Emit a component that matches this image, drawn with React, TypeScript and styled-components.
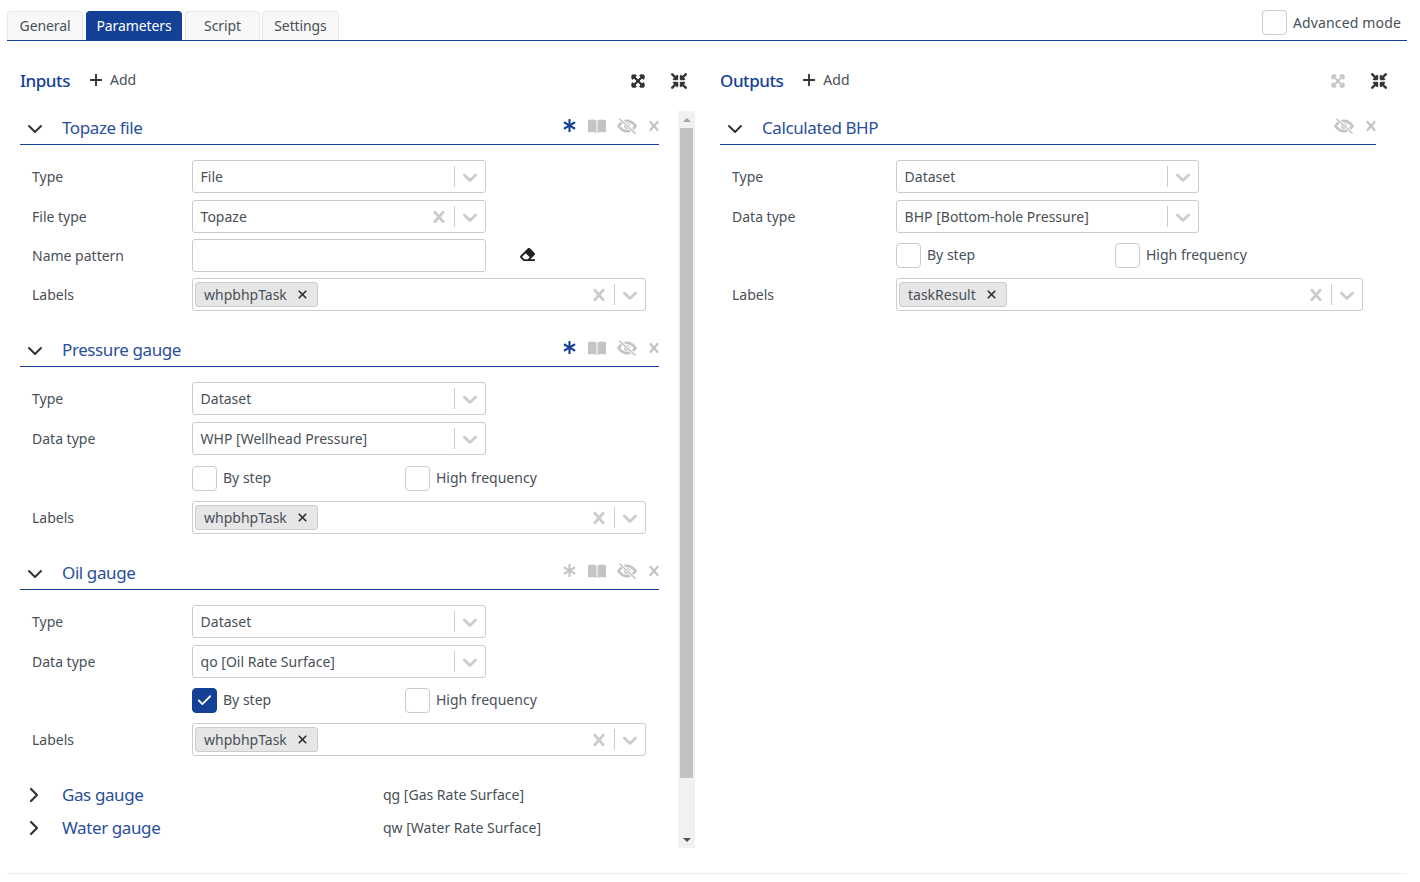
import React from 'react';
import styled, { createGlobalStyle } from 'styled-components';
import { Plus, ChevronDown, ChevronRight, Check, X } from 'lucide-react';
import { FaAsterisk, FaEraser, FaExpandArrowsAlt, FaCompressArrowsAlt } from 'react-icons/fa';

const PRIMARY = '#144196';
const FONT = '"Noto Sans", "Open Sans", sans-serif';

const Global = createGlobalStyle`
    html, body {
        margin: 0;
        background: #fff;
        font-family: ${FONT};
        font-size: 14px;
        color: #495057;
    }
`;

const Page = styled.div`
    width: 1420px;
    height: 882px;
    box-sizing: border-box;
    padding: 11px 13px 0 7px;
    display: flex;
    flex-direction: column;
    overflow: hidden;
`;

const TabBar = styled.div`
    height: 29px;
    display: flex;
    align-items: flex-end;
    gap: 3px;
    border-bottom: 1px solid ${PRIMARY};
    box-sizing: content-box;
`;

const Tab = styled.div<{ $active?: boolean; $w: number; $tight?: boolean }>`
    width: ${(p) => p.$w}px;
    height: 29px;
    box-sizing: border-box;
    padding-bottom: 2px;
    margin-left: ${(p) => (p.$tight ? '-1px' : '0')};
    display: flex;
    align-items: center;
    justify-content: center;
    border: 1px solid ${(p) => (p.$active ? PRIMARY : '#e6e6e6')};
    border-bottom: none;
    border-radius: 4px 4px 0 0;
    background: ${(p) => (p.$active ? PRIMARY : '#f8f8f8')};
    color: ${(p) => (p.$active ? '#fff' : '#495057')};
    font-size: 14px;
    letter-spacing: -0.1px;
`;

const Advanced = styled.label`
    margin-left: auto;
    align-self: flex-start;
    margin-top: -1px;
    margin-right: 6px;
    display: flex;
    align-items: center;
    gap: 6px;
    font-size: 14px;
    letter-spacing: 0.15px;
`;

const Columns = styled.div`
    display: flex;
    padding-left: 13px;
    flex: 1;
    min-height: 0;
`;

const Column = styled.div<{ $w: number }>`
    width: ${(p) => p.$w}px;
    display: flex;
    flex-direction: column;
`;

const ColumnHead = styled.div<{ $w: number }>`
    width: ${(p) => p.$w}px;
    height: 70px;
    box-sizing: border-box;
    display: flex;
    align-items: center;
    padding-top: 10px;
`;

const ColumnTitle = styled.div`
    color: ${PRIMARY};
    font-size: 17px;
    font-weight: 500;
    letter-spacing: -0.45px;
    margin-top: -2px;
    margin-right: 17px;
`;

const AddButton = styled.div`
    display: flex;
    align-items: center;
    gap: 5px;
    font-size: 14px;
    color: #495057;
    margin-top: -3px;
`;

const HeadIcons = styled.div`
    margin-left: auto;
    display: flex;
    gap: 26px;
    align-items: center;
    margin-top: -1px;
`;

const Scroller = styled.div`
    display: flex;
    height: 737px;
`;

const List = styled.div`
    width: 658px;
`;

const Track = styled.div`
    width: 17px;
    height: 737px;
    background: #f1f1f1;
    display: flex;
    flex-direction: column;
    align-items: center;
`;

const Arrow = styled.div<{ $up?: boolean }>`
    height: 17px;
    display: flex;
    align-items: center;
    justify-content: center;
    &::before {
        content: '';
        border-left: 4px solid transparent;
        border-right: 4px solid transparent;
        ${(p) => (p.$up ? 'border-bottom: 4px solid #a3a3a3;' : 'border-top: 4px solid #505050;')}
    }
`;

const Thumb = styled.div`
    width: 13px;
    height: 650px;
    background: #c1c1c1;
`;

const TrackFill = styled.div`
    flex: 1;
`;

const Section = styled.div<{ $w: number; $h?: number }>`
    width: ${(p) => p.$w}px;
    height: ${(p) => p.$h ?? 222}px;
`;

const SectionHead = styled.div`
    height: 33px;
    box-sizing: content-box;
    border-bottom: 1px solid ${PRIMARY};
    display: flex;
    align-items: center;
    padding-left: 3px;
`;

const Caret = styled(ChevronDown)`
    margin-top: 2px;
`;

const Name = styled.div`
    color: ${PRIMARY};
    font-size: 17px;
    font-weight: 400;
    letter-spacing: -0.4px;
    margin-left: 15px;
    opacity: 0.92;
`;

const ActionIcons = styled.div`
    margin-left: auto;
    margin-top: -4px;
    display: flex;
    align-items: center;
    gap: 11px;
    margin-right: -5px;
`;

const StarSlot = styled.span`
    display: flex;
    margin-right: 1px;
`;

const CloseSlot = styled.span`
    display: flex;
    margin-left: -4px;
`;

const Fields = styled.div`
    padding: 15px 0 0 12px;
`;

const Row = styled.div<{ $h?: number; $mb?: number }>`
    display: flex;
    align-items: center;
    height: ${(p) => p.$h ?? 33}px;
    margin-bottom: ${(p) => p.$mb ?? 7}px;
`;

const Label = styled.div<{ $w: number }>`
    width: ${(p) => p.$w}px;
    flex: none;
    margin-top: -1px;
`;

const Control = styled.div<{ $w: number }>`
    width: ${(p) => p.$w}px;
    height: 33px;
    box-sizing: border-box;
    border: 1px solid #ccc;
    border-radius: 3px;
    background: #fff;
    display: flex;
    align-items: center;
    padding-left: 7.6px;
    color: #495057;
`;

const Value = styled.div`
    flex: 1;
    white-space: nowrap;
`;

const TagValue = styled.div`
    flex: 1;
`;

const Indicators = styled.div`
    display: flex;
    align-items: center;
    flex: none;
    padding-right: 3px;
`;

const Divider = styled.span`
    width: 1px;
    height: 21px;
    background: #ccc;
    margin: 0 3px;
`;

const Tag = styled.div`
    width: fit-content;
    height: 25px;
    box-sizing: border-box;
    margin-left: -5.6px;
    padding: 0 8px 0 8px;
    display: flex;
    align-items: center;
    gap: 9px;
    background: #e6e6e6;
    border: 1px solid #ccc;
    border-radius: 3px;
    color: #495057;
    font-size: 14px;
`;

const Box = styled.span<{ $checked?: boolean }>`
    width: 25px;
    height: 25px;
    box-sizing: border-box;
    flex: none;
    display: flex;
    align-items: center;
    justify-content: center;
    border: 1px solid ${(p) => (p.$checked ? PRIMARY : '#ccc')};
    border-radius: 4px;
    background: ${(p) => (p.$checked ? PRIMARY : '#fff')};
`;

const CheckItem = styled.div<{ $w: number }>`
    width: ${(p) => p.$w}px;
    display: flex;
    align-items: center;
    gap: 6px;
`;

const CheckText = styled.span`
    margin-top: -2px;
`;

const EraserSlot = styled.div`
    margin-left: 34px;
    margin-top: -2px;
    display: flex;
    color: #222;
`;

const Collapsed = styled.div`
    height: 33px;
    display: flex;
    align-items: center;
    padding-left: 2px;
`;

const CollapsedName = styled(Name)`
    width: 321px;
    margin-left: 16px;
`;

const Footer = styled.div`
    height: 1px;
    background: #eee;
    margin-bottom: 8px;
`;

const TopGap = styled.div`
    height: 3px;
`;

const ReactSelectChevron = () => (
    <svg width="24" height="24" viewBox="0 0 20 20" fill="#ccc">
        <path d="M4.516 7.548c0.436-0.446 1.043-0.481 1.576 0l3.908 3.747 3.908-3.747c0.533-0.481 1.141-0.446 1.574 0 0.436 0.445 0.408 1.197 0 1.615-0.406 0.418-4.695 4.502-4.695 4.502-0.217 0.223-0.502 0.335-0.787 0.335s-0.57-0.112-0.789-0.335c0 0-4.287-4.084-4.695-4.502s-0.436-1.17 0-1.615z" />
    </svg>
);

const ReactSelectCross = ({ color = '#ccc', size = 24 }: { color?: string; size?: number }) => (
    <svg width={size} height={size} viewBox="0 0 20 20" fill={color}>
        <path d="M14.348 14.849c-0.469 0.469-1.229 0.469-1.697 0l-2.651-3.030-2.651 3.029c-0.469 0.469-1.229 0.469-1.697 0-0.469-0.469-0.469-1.229 0-1.697l2.758-3.15-2.759-3.152c-0.469-0.469-0.469-1.228 0-1.697s1.228-0.469 1.697 0l2.652 3.031 2.651-3.031c0.469-0.469 1.228-0.469 1.697 0s0.469 1.229 0 1.697l-2.758 3.152 2.758 3.15c0.469 0.469 0.469 1.229 0 1.698z" />
    </svg>
);

const BookIcon = () => (
    <svg width="18" height="14" viewBox="0 0 18 14" fill="#c4c4c4">
        <path d="M0 1.2C2.8 .2 6 .2 8.5 1.4V14C6 12.8 2.8 12.8 0 13.6Z" />
        <path d="M18 1.2C15.2 .2 12 .2 9.5 1.4V14C12 12.8 15.2 12.8 18 13.6Z" />
    </svg>
);

const HiddenEyeIcon = () => (
    <svg width="20" height="16" viewBox="0 0 20 16" fill="none">
        <path d="M1.5 8C4 4.4 6.8 2.8 10 2.8S16 4.4 18.5 8C16 11.6 13.2 13.2 10 13.2S4 11.6 1.5 8Z" stroke="#c4c4c4" strokeWidth="2.7" />
        <circle cx="10" cy="8" r="3" fill="#c4c4c4" />
        <path d="M3 .8L18 15.2" stroke="#fff" strokeWidth="3.2" />
        <path d="M2.4 .8L18.6 15.6" stroke="#c4c4c4" strokeWidth="1.5" />
    </svg>
);

const Select = ({ w, value, clear }: { w: number; value: string; clear?: boolean }) => (
    <Control $w={w}>
        <Value>{value}</Value>
        <Indicators>
            {clear && <ReactSelectCross />}
            <Divider />
            <ReactSelectChevron />
        </Indicators>
    </Control>
);

const TagSelect = ({ w, tag }: { w: number; tag: string }) => (
    <Control $w={w}>
        <TagValue>
            <Tag>
                {tag}
                <X size={13} strokeWidth={3.2} color="#333" />
            </Tag>
        </TagValue>
        <Indicators>
            <ReactSelectCross />
            <Divider />
            <ReactSelectChevron />
        </Indicators>
    </Control>
);

const Actions = ({ star, starOff, hideStar }: { star?: boolean; starOff?: boolean; hideStar?: boolean }) => (
    <ActionIcons>
        {!hideStar && (
            <StarSlot>
                <FaAsterisk size={13} color={star ? PRIMARY : starOff ? '#c4c4c4' : undefined} />
            </StarSlot>
        )}
        {!hideStar && <BookIcon />}
        <HiddenEyeIcon />
        <CloseSlot>
            <ReactSelectCross size={20} color="#c4c4c4" />
        </CloseSlot>
    </ActionIcons>
);

const Checks = ({ pad, first, checked }: { pad: number; first: number; checked?: boolean }) => (
    <Row $h={25} $mb={10}>
        <Label $w={pad} />
        <CheckItem $w={first}>
            <Box $checked={checked}>{checked && <Check size={17} color="#fff" strokeWidth={2.5} />}</Box>
            <CheckText>By step</CheckText>
        </CheckItem>
        <CheckItem $w={200}>
            <Box />
            <CheckText>High frequency</CheckText>
        </CheckItem>
    </Row>
);

const HeadIconSet = ({ dim }: { dim?: boolean }) => (
    <HeadIcons>
        <FaExpandArrowsAlt size={14} color={dim ? '#c8c8c8' : '#333'} stroke={dim ? '#c8c8c8' : '#333'} strokeWidth={36} />
        <FaCompressArrowsAlt size={16} color="#333" stroke="#333" strokeWidth={14} />
    </HeadIcons>
);

const DatasetSection = (props: { name: string; dataType: string; star: boolean; checked?: boolean; tag: string; h: number; dataMb: number }) => (
    <Section $w={639} $h={props.h}>
        <SectionHead>
            <Caret size={24} color="#333" strokeWidth={2} />
            <Name>{props.name}</Name>
            <Actions star={props.star} starOff={!props.star} />
        </SectionHead>
        <Fields>
            <Row>
                <Label $w={160}>Type</Label>
                <Select w={294} value="Dataset" />
            </Row>
            <Row $mb={props.dataMb}>
                <Label $w={160}>Data type</Label>
                <Select w={294} value={props.dataType} />
            </Row>
            <Checks pad={160} first={213} checked={props.checked} />
            <Row>
                <Label $w={160}>Labels</Label>
                <TagSelect w={454} tag={props.tag} />
            </Row>
        </Fields>
    </Section>
);

export default function App() {
    return (
        <Page>
            <Global />
            <TabBar>
                <Tab $w={76}>General</Tab>
                <Tab $w={96} $active>Parameters</Tab>
                <Tab $w={75}>Script</Tab>
                <Tab $w={77} $tight>Settings</Tab>
                <Advanced>
                    <Box />
                    Advanced mode
                </Advanced>
            </TabBar>
            <Columns>
                <Column $w={700}>
                    <ColumnHead $w={667}>
                        <ColumnTitle>Inputs</ColumnTitle>
                        <AddButton><Plus size={18} color="#333" strokeWidth={2.5} />Add</AddButton>
                        <HeadIconSet />
                    </ColumnHead>
                    <Scroller>
                        <List>
                            <Section $w={639}>
                                <SectionHead>
                                    <Caret size={24} color="#333" strokeWidth={2} />
                                    <Name>Topaze file</Name>
                                    <Actions star />
                                </SectionHead>
                                <Fields>
                                    <Row>
                                        <Label $w={160}>Type</Label>
                                        <Select w={294} value="File" />
                                    </Row>
                                    <Row $mb={6}>
                                        <Label $w={160}>File type</Label>
                                        <Select w={294} value="Topaze" clear />
                                    </Row>
                                    <Row $mb={6}>
                                        <Label $w={160}>Name pattern</Label>
                                        <Control $w={294} />
                                        <EraserSlot><FaEraser size={15} /></EraserSlot>
                                    </Row>
                                    <Row>
                                        <Label $w={160}>Labels</Label>
                                        <TagSelect w={454} tag="whpbhpTask" />
                                    </Row>
                                </Fields>
                            </Section>
                            <DatasetSection name="Pressure gauge" dataType="WHP [Wellhead Pressure]" star tag="whpbhpTask" h={223} dataMb={11} />
                            <DatasetSection name="Oil gauge" dataType="qo [Oil Rate Surface]" star={false} checked tag="whpbhpTask" h={222} dataMb={10} />
                            <Collapsed>
                                <ChevronRight size={24} color="#333" strokeWidth={2.2} />
                                <CollapsedName>Gas gauge</CollapsedName>
                                qg [Gas Rate Surface]
                            </Collapsed>
                            <Collapsed>
                                <ChevronRight size={24} color="#333" strokeWidth={2.2} />
                                <CollapsedName>Water gauge</CollapsedName>
                                qw [Water Rate Surface]
                            </Collapsed>
                        </List>
                        <Track>
                            <Arrow $up />
                            <Thumb />
                            <TrackFill />
                            <Arrow />
                        </Track>
                    </Scroller>
                </Column>
                <Column $w={667}>
                    <ColumnHead $w={667}>
                        <ColumnTitle>Outputs</ColumnTitle>
                        <AddButton><Plus size={18} color="#333" strokeWidth={2.5} />Add</AddButton>
                        <HeadIconSet dim />
                    </ColumnHead>
                    <Section $w={656}>
                        <SectionHead>
                            <Caret size={24} color="#333" strokeWidth={2} />
                            <Name>Calculated BHP</Name>
                            <Actions hideStar />
                        </SectionHead>
                        <Fields>
                            <Row>
                                <Label $w={164}>Type</Label>
                                <Select w={303} value="Dataset" />
                            </Row>
                            <Row $mb={10}>
                                <Label $w={164}>Data type</Label>
                                <Select w={303} value="BHP [Bottom-hole Pressure]" />
                            </Row>
                            <Checks pad={164} first={219} />
                            <Row>
                                <Label $w={164}>Labels</Label>
                                <TagSelect w={467} tag="taskResult" />
                            </Row>
                        </Fields>
                    </Section>
                </Column>
            </Columns>
            <TopGap />
            <Footer />
        </Page>
    );
}
